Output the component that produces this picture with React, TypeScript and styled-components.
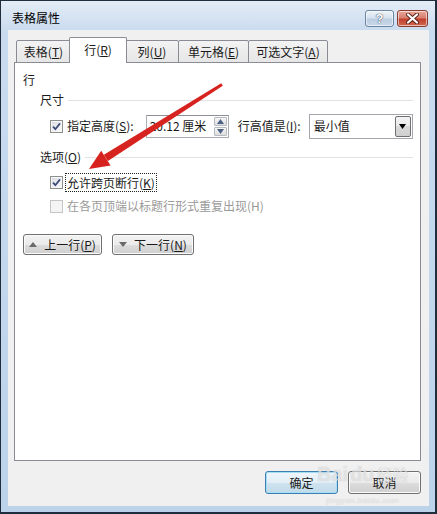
import React from "react";
import styled, { createGlobalStyle } from "styled-components";

const GlobalStyle = createGlobalStyle`
  html, body { margin: 0; padding: 0; background: #ffffff; }
  body {
    font-family: "Microsoft YaHei", "Noto Sans CJK SC", "Noto Sans", sans-serif;
    font-size: 12px;
    color: #1a1a1a;
  }
  #root { width: 437px; height: 514px; }
`;

const Window = styled.div`
  position: relative;
  width: 437px;
  height: 514px;
  box-sizing: border-box;
  border: 1px solid #1f2d3d;
  border-right-width: 2px;
  border-bottom-width: 2px;
  background: linear-gradient(#e4ecf6 0px, #c9dbef 30px, #bcd3ea 100%);
  display: flex;
  flex-direction: column;
  overflow: hidden;
`;

const TitleBar = styled.div`
  height: 29px;
  flex: none;
  display: flex;
  align-items: flex-start;
  justify-content: space-between;
  padding: 0 7px 0 11px;
`;

const Title = styled.div`
  margin-top: 9px;
  line-height: 16px;
  color: #000;
`;

const CaptionButtons = styled.div`
  display: flex;
  gap: 3px;
  margin-top: 9px;
`;

const CaptionButton = styled.div<{ $close?: boolean }>`
  width: ${(p) => (p.$close ? 31 : 29)}px;
  height: 17px;
  box-sizing: border-box;
  border: 1px solid ${(p) => (p.$close ? "#8a3c31" : "#6e85a1")};
  border-radius: 3px;
  background: ${(p) =>
    p.$close
      ? "linear-gradient(#e9a99c 0%, #d9806f 45%, #c2402d 55%, #d06a4f 100%)"
      : "linear-gradient(#eef3f9 0%, #d6e2ef 45%, #bccde1 55%, #cbd9e9 100%)"};
  box-shadow: inset 0 0 0 1px rgba(255, 255, 255, 0.55);
  display: flex;
  align-items: center;
  justify-content: center;
`;

const HelpGlyph = styled.span`
  font-family: "Liberation Sans", Arial, sans-serif;
  font-weight: bold;
  font-size: 13px;
  line-height: 13px;
  color: #ffffff;
  text-shadow: 0 0 1px #2a3d55, 0 0 1px #2a3d55;
`;

const Client = styled.div`
  flex: 1;
  min-height: 0;
  margin: 0 6px 6px 7px;
  padding: 7px 8px 12px 6px;
  background: #f0f0f0;
  display: flex;
  flex-direction: column;
`;

const TabStrip = styled.div`
  height: 26px;
  flex: none;
  display: flex;
  align-items: flex-end;
  padding-left: 2px;
  margin-bottom: -1px;
  position: relative;
  z-index: 1;
`;

const Tab = styled.div<{ $active?: boolean; $w: number; $ml?: number; $mr?: number }>`
  box-sizing: border-box;
  width: ${(p) => p.$w}px;
  height: ${(p) => (p.$active ? 26 : 23)}px;
  margin-left: ${(p) => p.$ml ?? 0}px;
  margin-right: ${(p) => p.$mr ?? 0}px;
  border: 1px solid #898c95;
  border-bottom: ${(p) => (p.$active ? "none" : "1px solid #898c95")};
  border-radius: 2px 2px 0 0;
  background: ${(p) => (p.$active ? "#ffffff" : "linear-gradient(#f3f3f3, #e6e6e6)")};
  display: flex;
  align-items: center;
  justify-content: center;
  line-height: 16px;
  position: relative;
  z-index: ${(p) => (p.$active ? 2 : 1)};
  padding-bottom: ${(p) => (p.$active ? 1 : 0)}px;
`;

const Panel = styled.div`
  flex: 1;
  min-height: 0;
  background: #ffffff;
  border: 1px solid #898c95;
  padding: 9px 7px 0 8px;
  display: flex;
  flex-direction: column;
`;

const GroupTitle = styled.div`
  line-height: 16px;
  height: 16px;
`;

const SectionHeader = styled.div<{ $mt: number }>`
  display: flex;
  align-items: center;
  gap: 4px;
  height: 16px;
  line-height: 16px;
  margin: ${(p) => p.$mt}px 0 0 17px;
  &::after {
    content: "";
    flex: 1;
    height: 1px;
    background: #e2e2e2;
  }
`;

const FieldRow = styled.div`
  display: flex;
  align-items: center;
  height: 24px;
  margin: 6px 0 0 27px;
`;

const CheckRow = styled.div<{ $mt: number }>`
  display: flex;
  align-items: center;
  height: 20px;
  margin: ${(p) => p.$mt}px 0 0 27px;
`;

const Box = styled.span<{ $disabled?: boolean }>`
  width: 13px;
  height: 13px;
  flex: none;
  box-sizing: border-box;
  border: 1px solid ${(p) => (p.$disabled ? "#c4c4c4" : "#8e8f8f")};
  background: ${(p) =>
    p.$disabled ? "#f4f4f4" : "linear-gradient(135deg, #d4d7dc 0%, #f2f2f2 60%, #fbfbfb 100%)"};
  box-shadow: inset 0 0 0 1px ${(p) => (p.$disabled ? "#f4f4f4" : "#f6f6f6")};
  display: flex;
  align-items: center;
  justify-content: center;
`;

const Label = styled.span<{ $ml?: number; $disabled?: boolean }>`
  margin-left: ${(p) => p.$ml ?? 0}px;
  line-height: 16px;
  white-space: nowrap;
  color: ${(p) => (p.$disabled ? "#9a9a9a" : "#1a1a1a")};
`;

const FocusLabel = styled.span`
  margin-left: 2px;
  border: 1px dotted #222;
  padding: 0 1px;
  line-height: 17px;
  white-space: nowrap;
`;

const SpinInput = styled.div`
  margin-left: 12px;
  width: 83px;
  height: 23px;
  box-sizing: border-box;
  border: 1px solid #abadb3;
  border-top-color: #8e9298;
  background: #fff;
  display: flex;
  align-items: center;
  padding: 0 1px 0 3px;
`;

const InputText = styled.span`
  flex: 1;
  line-height: 16px;
  white-space: nowrap;
`;

const SpinColumn = styled.div`
  width: 13px;
  height: 19px;
  display: flex;
  flex-direction: column;
  gap: 1px;
`;

const SpinButton = styled.div`
  flex: 1;
  box-sizing: border-box;
  border: 1px solid #b5b9c0;
  border-radius: 1px;
  background: linear-gradient(#f6f6f6, #dedede);
  display: flex;
  align-items: center;
  justify-content: center;
`;

const Select = styled.div`
  margin-left: 8px;
  width: 104px;
  height: 25px;
  box-sizing: border-box;
  border: 1px solid #a4a8ae;
  background: #fff;
  display: flex;
  align-items: center;
  padding: 1px 1px 1px 4px;
`;

const SelectText = styled.span`
  flex: 1;
  line-height: 16px;
`;

const DropButton = styled.div`
  width: 16px;
  height: 100%;
  box-sizing: border-box;
  border: 1px solid #707070;
  border-radius: 2px;
  background: linear-gradient(#f2f2f2 0%, #ebebeb 50%, #dadada 50%, #cfcfcf 100%);
  display: flex;
  align-items: center;
  justify-content: center;
`;

const NavRow = styled.div`
  display: flex;
  gap: 10px;
  margin-top: 18px;
`;

const PushButton = styled.div<{ $w: number; $h: number; $default?: boolean }>`
  width: ${(p) => p.$w}px;
  height: ${(p) => p.$h}px;
  box-sizing: border-box;
  border: 1px solid ${(p) => (p.$default ? "#3c7fb1" : "#707070")};
  border-radius: 3px;
  background: ${(p) =>
    p.$default
      ? "linear-gradient(#eef6fb 0%, #e2eef6 50%, #cfe3ef 50%, #c1dbea 100%)"
      : "linear-gradient(#f2f2f2 0%, #ebebeb 50%, #dddddd 50%, #cfcfcf 100%)"};
  box-shadow: inset 0 0 0 1px ${(p) => (p.$default ? "#a8def6" : "#fbfbfb")};
  display: flex;
  align-items: center;
  justify-content: center;
  gap: 7px;
  line-height: 16px;
  white-space: nowrap;
`;

const Footer = styled.div`
  flex: none;
  display: flex;
  justify-content: flex-end;
  gap: 10px;
  margin-top: 10px;
`;

const Watermark = styled.div`
  position: absolute;
  left: 316px;
  top: 461px;
  display: flex;
  flex-direction: column;
  align-items: center;
  pointer-events: none;
  color: rgba(255, 255, 255, 0.5);
  text-shadow: 0 0 1px rgba(150, 150, 150, 0.5);
`;

const WatermarkMain = styled.div`
  display: flex;
  align-items: baseline;
  gap: 2px;
  font-family: "Liberation Sans", Arial, sans-serif;
  font-weight: bold;
  font-size: 20px;
  line-height: 24px;
`;

const WatermarkCjk = styled.span`
  font-family: "Noto Sans CJK SC", sans-serif;
  font-size: 16px;
  font-weight: normal;
`;

const WatermarkSub = styled.div`
  margin-top: 10px;
  font-family: "Liberation Sans", Arial, sans-serif;
  font-size: 8px;
  line-height: 9px;
  letter-spacing: 0.5px;
`;

const ArrowOverlay = styled.svg`
  position: absolute;
  left: 0;
  top: 0;
  pointer-events: none;
`;

const Check = () => (
  <svg width="9" height="9" viewBox="0 0 9 9">
    <path d="M1 4.6 L3.4 7.2 L8 1.4" fill="none" stroke="#3c4d7d" strokeWidth="1.8" />
  </svg>
);

const Tri = ({ up, color = "#4d6185", w = 7 }: { up?: boolean; color?: string; w?: number }) => (
  <svg width={w} height={Math.ceil(w / 2) + 1} viewBox={`0 0 ${w} ${Math.ceil(w / 2) + 1}`}>
    {up ? (
      <path d={`M0 ${Math.ceil(w / 2) + 1} L${w / 2} 0 L${w} ${Math.ceil(w / 2) + 1} Z`} fill={color} />
    ) : (
      <path d={`M0 0 L${w / 2} ${Math.ceil(w / 2) + 1} L${w} 0 Z`} fill={color} />
    )}
  </svg>
);

const CloseGlyph = () => (
  <svg width="13" height="11" viewBox="0 0 13 11">
    <path d="M2 1.5 L11 9.5 M11 1.5 L2 9.5" stroke="#5a2018" strokeWidth="4" strokeLinecap="round" />
    <path d="M2 1.5 L11 9.5 M11 1.5 L2 9.5" stroke="#ffffff" strokeWidth="2.2" strokeLinecap="round" />
  </svg>
);

export default function App() {
  return (
    <>
      <GlobalStyle />
      <Window>
        <TitleBar>
          <Title>表格属性</Title>
          <CaptionButtons>
            <CaptionButton>
              <HelpGlyph>?</HelpGlyph>
            </CaptionButton>
            <CaptionButton $close>
              <CloseGlyph />
            </CaptionButton>
          </CaptionButtons>
        </TitleBar>
        <Client>
          <TabStrip>
            <Tab $w={55}>表格(<u>T</u>)</Tab>
            <Tab $w={58} $active $ml={-2} $mr={-2}>
              行(<u>R</u>)
            </Tab>
            <Tab $w={54}>列(<u>U</u>)</Tab>
            <Tab $w={71} $ml={-1}>
              单元格(<u>E</u>)
            </Tab>
            <Tab $w={80} $ml={-1}>
              可选文字(<u>A</u>)
            </Tab>
          </TabStrip>
          <Panel>
            <GroupTitle>行</GroupTitle>
            <SectionHeader $mt={4}>尺寸</SectionHeader>
            <FieldRow>
              <Box>
                <Check />
              </Box>
              <Label $ml={4}>
                指定高度(<u>S</u>):
              </Label>
              <SpinInput>
                <InputText>20.12 厘米</InputText>
                <SpinColumn>
                  <SpinButton>
                    <Tri up />
                  </SpinButton>
                  <SpinButton>
                    <Tri />
                  </SpinButton>
                </SpinColumn>
              </SpinInput>
              <Label $ml={9}>
                行高值是(<u>I</u>):
              </Label>
              <Select>
                <SelectText>最小值</SelectText>
                <DropButton>
                  <Tri color="#000" />
                </DropButton>
              </Select>
            </FieldRow>
            <SectionHeader $mt={11}>
              <span>
                选项(<u>O</u>)
              </span>
            </SectionHeader>
            <CheckRow $mt={7}>
              <Box>
                <Check />
              </Box>
              <FocusLabel>
                允许跨页断行(<u>K</u>)
              </FocusLabel>
            </CheckRow>
            <CheckRow $mt={4}>
              <Box $disabled />
              <Label $ml={4} $disabled>
                在各页顶端以标题行形式重复出现(H)
              </Label>
            </CheckRow>
            <NavRow>
              <PushButton $w={79} $h={21}>
                <Tri up color="#6a6a6a" w={8} />
                <span>
                  上一行(<u>P</u>)
                </span>
              </PushButton>
              <PushButton $w={82} $h={21}>
                <Tri color="#6a6a6a" w={8} />
                <span>
                  下一行(<u>N</u>)
                </span>
              </PushButton>
            </NavRow>
          </Panel>
          <Footer>
            <PushButton $w={73} $h={23} $default>
              确定
            </PushButton>
            <PushButton $w={73} $h={23}>
              取消
            </PushButton>
          </Footer>
        </Client>
        <Watermark>
          <WatermarkMain>
            <span>Bai</span>
            <span>du</span>
            <WatermarkCjk>经验</WatermarkCjk>
          </WatermarkMain>
          <WatermarkSub>jingyan.baidu.com</WatermarkSub>
        </Watermark>
        <ArrowOverlay width="437" height="514" viewBox="0 0 437 514">
          <polygon points="220.2,82.2 221.8,84.8 106.9,160.0 102.9,153.7" fill="#d7231f" />
          <polygon points="88,168 100.2,149.8 109.6,164.5" fill="#d7231f" />
        </ArrowOverlay>
      </Window>
    </>
  );
}
